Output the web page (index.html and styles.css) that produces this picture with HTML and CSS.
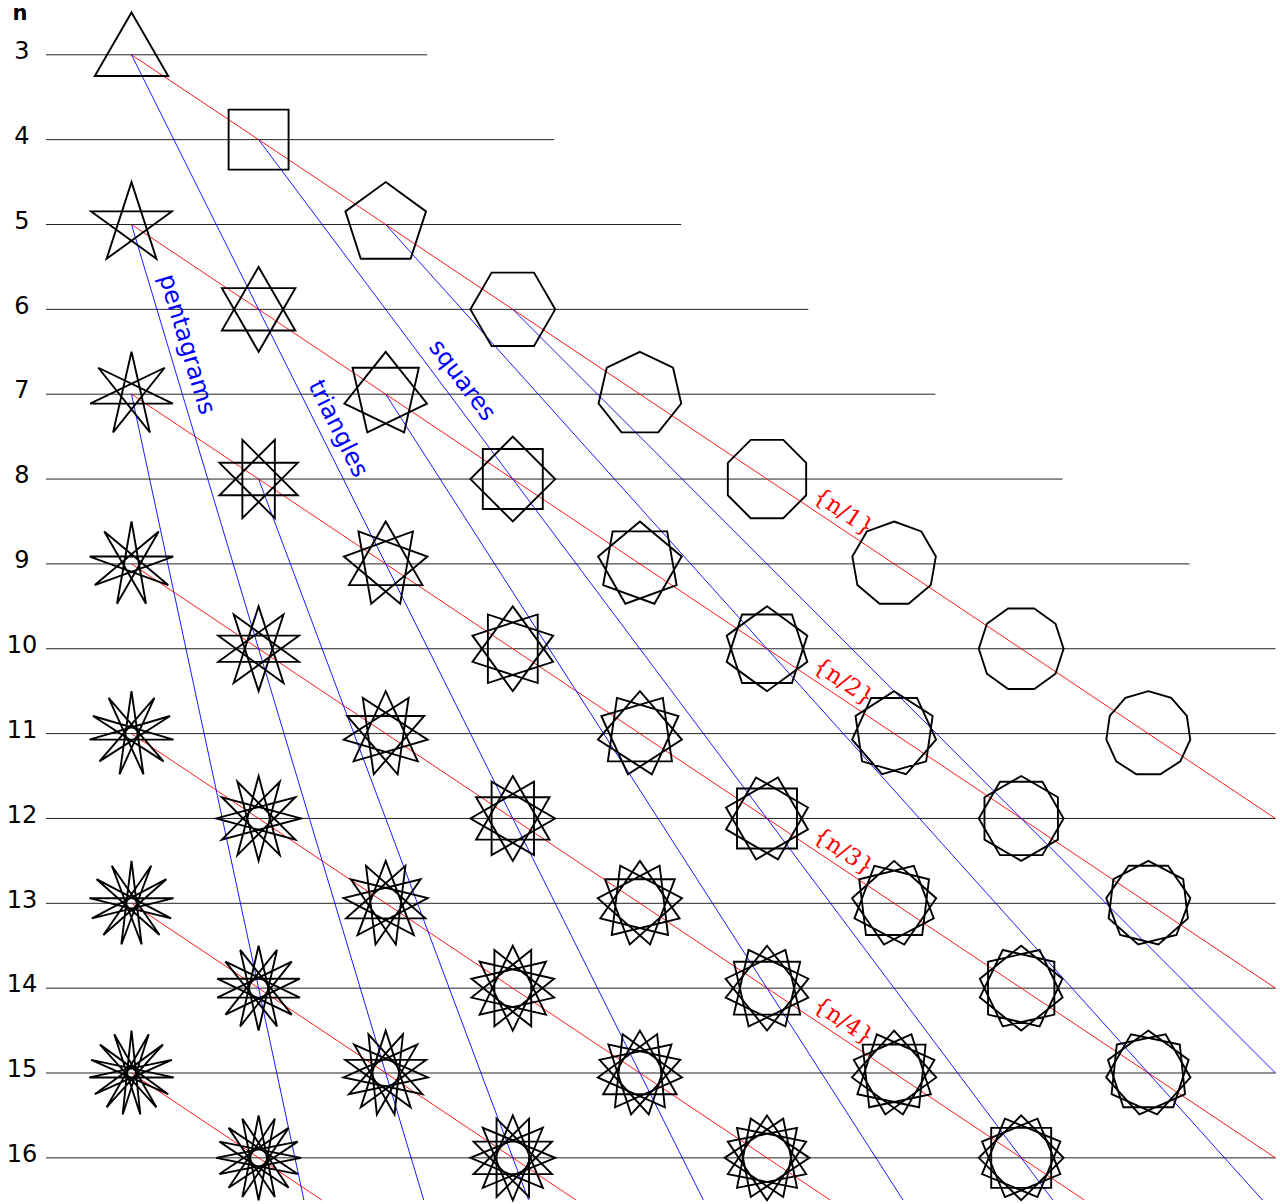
FILE: index.html
```html
<!DOCTYPE html>
<html lang="en">
<head>
<meta charset="utf-8">
<title>Regular star polygons {n/k}</title>
<link rel="stylesheet" href="styles.css">
</head>
<body>
<svg id="chart" class="chart" width="1280" height="1204" viewBox="0 0 1280 1204" xmlns="http://www.w3.org/2000/svg">
  <g id="grid" class="grid"></g>
  <g id="red" class="red-lines"></g>
  <g id="blue" class="blue-lines"></g>
  <g id="stars" class="stars"></g>
  <g class="row-labels">
    <text class="head" x="20" y="20">n</text>
    <text x="22" y="59">3</text>
    <text x="22" y="143.8">4</text>
    <text x="22" y="228.7">5</text>
    <text x="22" y="313.5">6</text>
    <text x="22" y="398.4">7</text>
    <text x="22" y="483.2">8</text>
    <text x="22" y="568">9</text>
    <text x="22" y="653">10</text>
    <text x="22" y="737.8">11</text>
    <text x="22" y="822.6">12</text>
    <text x="22" y="907.5">13</text>
    <text x="22" y="992.4">14</text>
    <text x="22" y="1077.2">15</text>
    <text x="22" y="1162">16</text>
  </g>
  <g class="series-labels">
    <text class="red-label" transform="translate(812 499.5) rotate(33.72)">{n/1}</text>
    <text class="red-label" transform="translate(812 669.2) rotate(33.72)">{n/2}</text>
    <text class="red-label" transform="translate(812 838.9) rotate(33.72)">{n/3}</text>
    <text class="red-label" transform="translate(812 1008.6) rotate(33.72)">{n/4}</text>
  </g>
  <g class="family-labels">
    <text class="blue-label" transform="translate(159 277) rotate(73.32)">pentagrams</text>
    <text class="blue-label" transform="translate(308 385) rotate(63.47)">triangles</text>
    <text class="blue-label" transform="translate(428 347) rotate(53.17)">squares</text>
  </g>
</svg>
<script src="script.js"></script>
</body>
</html>
```

FILE: styles.css
```css
html, body {
  margin: 0;
  padding: 0;
  background: #ffffff;
}

.chart {
  display: block;
}

.grid line {
  stroke: #222222;
  stroke-width: 1;
}

.red-lines line {
  stroke: #ff0000;
  stroke-width: 0.9;
}

.blue-lines line {
  stroke: #0000ff;
  stroke-width: 0.9;
}

.stars polygon {
  fill: none;
  stroke: #000000;
  stroke-width: 1.9;
}

.row-labels text {
  font-family: "DejaVu Sans", "Liberation Sans", sans-serif;
  font-size: 24px;
  text-anchor: middle;
  fill: #000000;
}

.row-labels .head {
  font-weight: bold;
  font-size: 21px;
}

.red-label {
  font-family: "DejaVu Serif", "Liberation Serif", serif;
  font-size: 23px;
  fill: #ff0000;
}

.blue-label {
  font-family: "DejaVu Sans", "Liberation Sans", sans-serif;
  font-size: 24px;
  fill: #0000ff;
}
```

FILE: script.js
```js
(function () {
  var NS = "http://www.w3.org/2000/svg";
  var Y0 = 54.8, DY = 84.85, X0 = 131.5, DX = 127.1, R = 42.4;
  var XMAX = 1275.5, YMAX = 1200;

  function cx(c) { return X0 + c * DX; }
  function cy(n) { return Y0 + (n - 3) * DY; }

  function el(name, attrs, parent) {
    var e = document.createElementNS(NS, name);
    for (var k in attrs) e.setAttribute(k, attrs[k]);
    parent.appendChild(e);
    return e;
  }

  function ray(parent, x0, y0, dx, dy) {
    var t = Math.min((XMAX - x0) / dx, (YMAX - y0) / dy);
    el("line", { x1: x0, y1: y0, x2: x0 + dx * t, y2: y0 + dy * t }, parent);
  }

  function gcd(a, b) { return b ? gcd(b, a % b) : a; }

  var grid = document.getElementById("grid");
  for (var n = 3; n <= 16; n++) {
    var x2 = Math.min(427 + (n - 3) * DX, XMAX);
    el("line", { x1: 46, y1: cy(n), x2: x2, y2: cy(n) }, grid);
  }

  var red = document.getElementById("red");
  for (var k = 1; k <= 7; k++) {
    ray(red, cx(0), cy(2 * k + 1), DX, DY);
  }

  var blue = document.getElementById("blue");
  var fams = [[3, 1], [4, 1], [5, 1], [5, 2], [6, 1], [7, 2], [7, 3], [8, 3]];
  fams.forEach(function (f) {
    var n = f[0], k = f[1];
    ray(blue, cx(n - 2 * k - 1), cy(n), DX * (n - 2 * k), DY * n);
  });

  var stars = document.getElementById("stars");
  for (var n2 = 3; n2 <= 16; n2++) {
    for (var k2 = 1; 2 * k2 < n2; k2++) {
      var c = n2 - 2 * k2 - 1;
      if (c > 8) continue;
      var off = 0;
      if ((k2 === 1 && n2 % 2 === 0) || (n2 === 8 && k2 === 3) || (n2 === 12 && k2 === 3)) {
        off = 180 / n2;
      }
      var px = cx(c), py = cy(n2);
      var verts = [];
      for (var j = 0; j < n2; j++) {
        var a = (-90 + off + j * 360 / n2) * Math.PI / 180;
        verts.push([px + R * Math.cos(a), py + R * Math.sin(a)]);
      }
      var d = gcd(n2, k2);
      for (var s = 0; s < d; s++) {
        var pts = [];
        for (var m = 0; m < n2 / d; m++) {
          var v = verts[(s + m * k2) % n2];
          pts.push(v[0].toFixed(2) + "," + v[1].toFixed(2));
        }
        el("polygon", { points: pts.join(" ") }, stars);
      }
    }
  }
})();
```
